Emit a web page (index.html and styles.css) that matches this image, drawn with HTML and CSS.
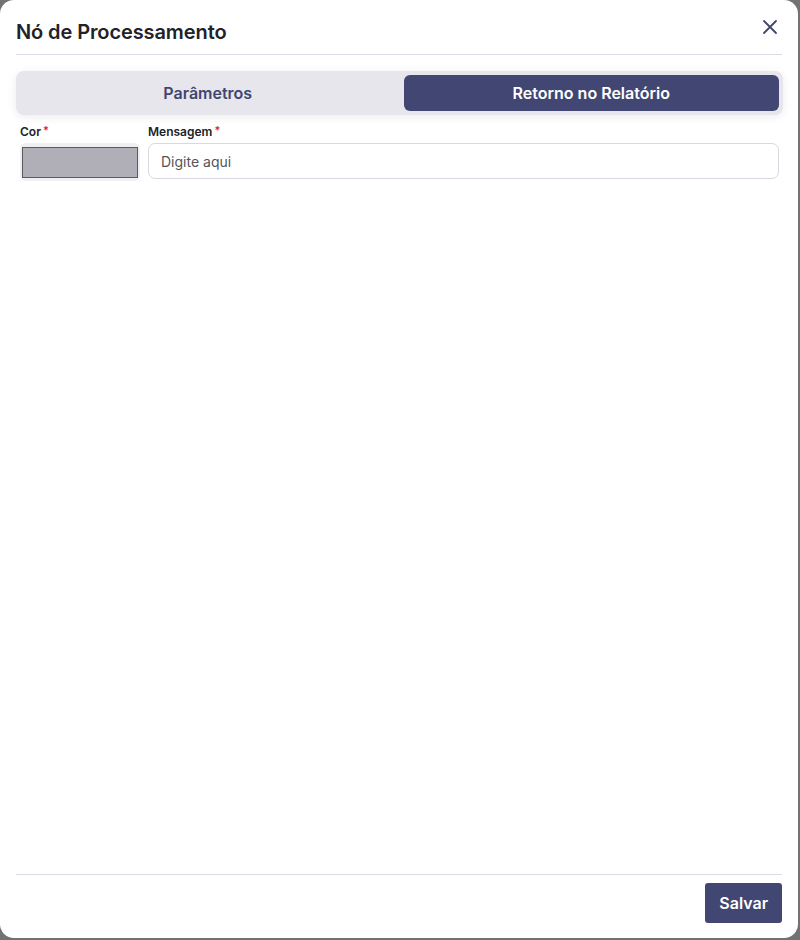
FILE: index.html
```html
<!DOCTYPE html>
<html lang="pt">
<head>
    <meta charset="UTF-8">
    <meta name="viewport" content="width=device-width, initial-scale=1.0">
    <title>Nó de Processamento</title>
    <link rel="stylesheet" href="styles.css">
</head>
<body>

<div class="modal">
    <!-- Cabeçalho -->
    <div class="modal-header">
        <h1>Nó de Processamento</h1>
        <button class="close-btn" aria-label="Fechar">
            <svg width="16" height="16" viewBox="0 0 16 16">
                <path d="M2 2 L14 14 M14 2 L2 14" stroke="#42456f" stroke-width="1.8" stroke-linecap="round"/>
            </svg>
        </button>
    </div>

    <!-- Abas -->
    <div class="tabs">
        <div class="tab">Parâmetros</div>
        <div class="tab active">Retorno no Relatório</div>
    </div>

    <!-- Campos -->
    <div class="fields">
        <div class="field field-color">
            <label>Cor<span class="req">*</span></label>
            <div class="color-box"><div class="swatch"></div></div>
        </div>
        <div class="field field-msg">
            <label>Mensagem<span class="req">*</span></label>
            <input type="text" class="input-field" placeholder="Digite aqui">
        </div>
    </div>

    <div class="modal-footer">
        <button class="btn">Salvar</button>
    </div>
</div>

</body>
</html>
```

FILE: styles.css
```css
* {
    box-sizing: border-box;
}
body {
    margin: 0;
    background-color: #727272;
    font-family: Inter, "Noto Sans", sans-serif;
    color: #222228;
}
.modal {
    width: 798px;
    height: 938px;
    background-color: white;
    border-radius: 14px;
    padding: 0 16px 0 16px;
    display: flex;
    flex-direction: column;
}
.modal-header {
    display: flex;
    align-items: center;
    justify-content: space-between;
    height: 55px;
    border-bottom: 1px solid #dcdbe3;
    padding-top: 9px;
}
.modal-header h1 {
    margin: 0;
    font-size: 20px;
    font-weight: 600;
    letter-spacing: -0.1px;
}
.close-btn {
    background: none;
    border: none;
    padding: 0;
    margin-right: 4px;
    margin-top: -10px;
    cursor: pointer;
    display: flex;
}
.tabs {
    margin-top: 16px;
    display: flex;
    gap: 8px;
    padding: 4px;
    background-color: #e6e6ec;
    border-radius: 8px;
    box-shadow: 0 2px 10px rgba(0, 0, 0, 0.08);
    width: 767px;
}
.tab {
    flex: 1;
    height: 36px;
    display: flex;
    align-items: center;
    justify-content: center;
    font-size: 16px;
    font-weight: 600;
    color: #42456f;
    border-radius: 6px;
}
.tab.active {
    background-color: #424673;
    color: white;
}
.fields {
    display: flex;
    gap: 8px;
    margin-top: 9px;
    padding: 0 3px 0 4px;
    flex: 1;
}
.field label {
    display: block;
    font-size: 12px;
    font-weight: 600;
    height: 19px;
    line-height: 16px;
}
.req {
    color: #e5242b;
    margin-left: 2px;
    font-size: 11px;
    vertical-align: top;
    line-height: 12px;
}
.field-color {
    width: 120px;
}
.color-box {
    height: 38px;
    background-color: #efeff1;
    border-radius: 6px;
    padding: 4px 2px 3px 2px;
}
.swatch {
    height: 100%;
    background-color: #b0afb8;
    border: 1px solid #5a5a60;
}
.field-msg {
    flex: 1;
}
.input-field {
    width: 100%;
    height: 36px;
    border: 1px solid #d9d8e0;
    border-radius: 7px;
    padding: 0 12px;
    font-family: inherit;
    font-size: 14px;
    color: #222;
}
.input-field::placeholder {
    color: #55555c;
}
.modal-footer {
    border-top: 1px solid #dcdbe3;
    height: 64px;
    display: flex;
    justify-content: flex-end;
    align-items: flex-start;
    padding-top: 8px;
}
.btn {
    background-color: #424673;
    color: white;
    border: none;
    border-radius: 3px;
    height: 40px;
    padding: 0 14px;
    font-family: inherit;
    font-size: 16px;
    font-weight: 600;
    cursor: pointer;
}
```
